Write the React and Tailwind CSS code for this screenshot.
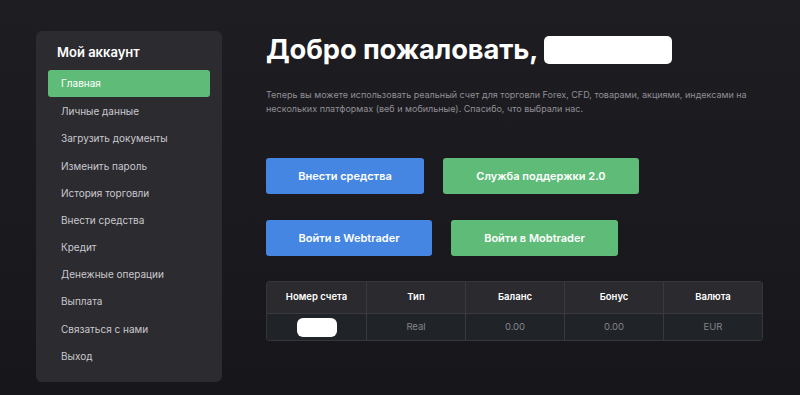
import React from 'react';

const menu = [
  'Главная',
  'Личные данные',
  'Загрузить документы',
  'Изменить пароль',
  'История торговли',
  'Внести средства',
  'Кредит',
  'Денежные операции',
  'Выплата',
  'Связаться с нами',
  'Выход',
];

const columns = ['Номер счета', 'Тип', 'Баланс', 'Бонус', 'Валюта'];

function Sidebar() {
  return (
    <aside className="w-[186px] h-[351px] shrink-0 self-start rounded-[6px] bg-[#2c2b30] px-3 pt-[14px]">
      <h3 className="pl-[9px] text-[13px] leading-[14px] font-semibold text-white mb-[11px]">Мой аккаунт</h3>
      <ul className="flex flex-col gap-[0.1px]">
        {menu.map((item, i) => (
          <li
            key={item}
            className={
              i === 0
                ? 'h-[27px] flex items-center pl-[13px] rounded-[3px] bg-[#5fbc78] text-[10px] text-white'
                : 'h-[27.1px] flex items-center pl-[13px] pt-[2px] text-[10px] text-[#c9c9cd]'
            }
          >
            {item}
          </li>
        ))}
      </ul>
    </aside>
  );
}

function Btn({ color, width, children }) {
  const bg = color === 'blue' ? 'bg-[#4586e3]' : 'bg-[#5fbc78]';
  return (
    <button className={`${bg} ${width} h-[36px] rounded-[3px] text-[11px] font-semibold text-white`}>
      {children}
    </button>
  );
}

export default function App() {
  return (
    <div
      className="w-[800px] h-[395px] overflow-hidden bg-gradient-to-b from-[#1e1d22] to-[#17161b] flex items-start pl-[36px] pt-[31px] gap-[44px]"
      style={{ fontFamily: 'Inter, "Noto Sans", sans-serif' }}
    >
      <Sidebar />

      <main className="flex flex-col">
        <div className="flex items-center gap-[6px] h-[34px] mt-[2px]">
          <h1 className="text-[27.3px] leading-[34px] font-bold text-white tracking-[-0.1px]">Добро пожаловать,</h1>
          <span className="w-[128px] h-[28px] rounded-[5px] bg-white" />
        </div>

        <p className="mt-[21px] w-[482px] text-[9px] leading-[14px] text-[#908f95]">
          Теперь вы можете использовать реальный счет для торговли Forex, CFD, товарами, акциями, индексами на нескольких платформах (веб и мобильные). Спасибо, что выбрали нас.
        </p>

        <div className="mt-[42px] flex gap-[19px]">
          <Btn color="blue" width="w-[158px]">Внести средства</Btn>
          <Btn color="green" width="w-[196px]">Служба поддержки 2.0</Btn>
        </div>
        <div className="mt-[26px] flex gap-[19px]">
          <Btn color="blue" width="w-[166px]">Войти в Webtrader</Btn>
          <Btn color="green" width="w-[167px]">Войти в Mobtrader</Btn>
        </div>

        <div className="mt-[25px] w-[497px] rounded-[3px] overflow-hidden border border-[#36353b]">
          <div className="grid grid-cols-5 bg-[#2b2a2f] h-[31px]">
            {columns.map((c, i) => (
              <div
                key={c}
                className={`flex items-center justify-center text-[9.5px] font-semibold text-white ${i > 0 ? 'border-l border-[#3a393f]' : ''}`}
              >
                {c}
              </div>
            ))}
          </div>
          <div className="grid grid-cols-5 bg-[#202328] h-[27px] border-t border-[#3a393f] text-[9.5px] text-[#85858a]">
            <div className="flex items-center justify-center">
              <span className="w-[40px] h-[19px] rounded-[6px] bg-white" />
            </div>
            <div className="flex items-center justify-center border-l border-[#3a393f]">Real</div>
            <div className="flex items-center justify-center border-l border-[#3a393f]">0.00</div>
            <div className="flex items-center justify-center border-l border-[#3a393f]">0.00</div>
            <div className="flex items-center justify-center border-l border-[#3a393f]">EUR</div>
          </div>
        </div>
      </main>
    </div>
  );
}
